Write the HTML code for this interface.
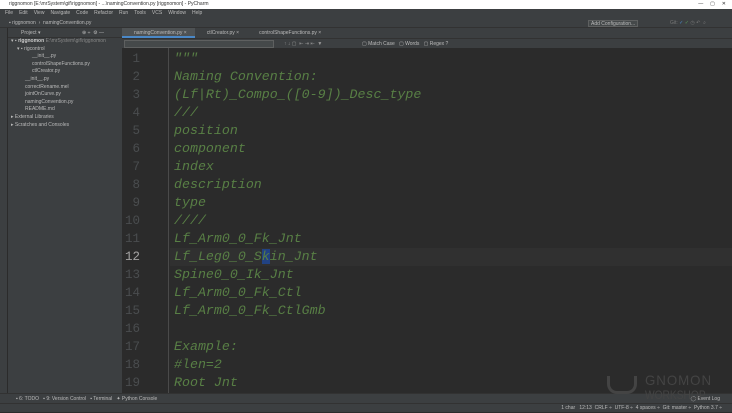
<!DOCTYPE html>
<html><head><meta charset="utf-8"><style>
*{margin:0;padding:0;box-sizing:border-box}
body{width:732px;height:412px;overflow:hidden;background:#2b2b2b;font-family:"Liberation Sans",sans-serif;font-size:5px;color:#bbb;position:relative}
.abs{position:absolute}
.title{left:0;top:0;width:732px;height:9px;background:#fff;color:#333;font-size:5px;line-height:9px;padding-left:9px}
.menu{left:0;top:9px;width:732px;height:9px;background:#3c3f41;line-height:9px;padding-left:2px}
.menu span{margin:0 3px}
.nav{left:0;top:18px;width:732px;height:10px;background:#3c3f41;line-height:10px;padding-left:9px;border-bottom:1px solid #323232}
.strip{left:0;top:28px;width:8px;height:365px;background:#3c3f41;border-right:1px solid #2b2b2b}
.proj{left:8px;top:28px;width:114px;height:365px;background:#3c3f41}
.proj .hd{height:10px;line-height:10px;padding-left:13px;border-bottom:1px solid #323232}
.proj div.r{height:7.6px;line-height:7.6px;white-space:nowrap}
.tabs{left:122px;top:28px;width:610px;height:10px;background:#3c3f41;line-height:10px}
.tab{display:inline-block;padding:0 8px 0 12px}
.tab.a{background:#4e5254;border-bottom:2px solid #4a88c7;height:10px}
.find{left:122px;top:38px;width:610px;height:10px;background:#3c3f41;line-height:10px;border-top:1px solid #323232}
.fbox{left:2px;top:1px;width:150px;height:8px;background:#45494a;border:1px solid #5e6060}
.gut{left:168px;top:48px;width:1px;height:345px;background:#4a4a4a}
.code{left:122px;top:48px;width:604px;height:345px;font-family:"Liberation Mono",monospace;font-style:italic;font-size:13.3px;}
.ln{position:absolute;left:0;width:610px;height:18px;line-height:18px}
.ln .n{position:absolute;left:0;width:18px;text-align:right;color:#4a4d4f;font-style:normal;font-size:12.5px}
.ln .t{position:absolute;left:52px;color:#587f45}
.cur{background:#303030}
.bot{left:0;top:393px;width:732px;height:10px;background:#3c3f41;line-height:10px;padding-left:16px;border-top:1px solid #323232}
.status{left:0;top:403px;width:732px;height:9px;background:#3c3f41;line-height:9px;border-top:1px solid #323232}
.wm{position:absolute;color:#444;font-size:14px;line-height:14px;letter-spacing:1px;transform-origin:0 0}
</style></head><body>
<div class="abs title">riggnomon [E:\mrSystem\gif\riggnomon] - ...\namingConvention.py [riggnomon] - PyCharm<span style="position:absolute;right:6px">—&nbsp;&nbsp;&nbsp;&nbsp;&nbsp;▢&nbsp;&nbsp;&nbsp;&nbsp;&nbsp;✕</span></div>
<div class="abs menu"><span>File</span><span>Edit</span><span>View</span><span>Navigate</span><span>Code</span><span>Refactor</span><span>Run</span><span>Tools</span><span>VCS</span><span>Window</span><span>Help</span></div>
<div class="abs nav">▪ riggnomon &nbsp;› &nbsp;namingConvention.py
<span style="position:absolute;left:588px;top:2px;height:7px;line-height:6px;border:1px solid #5e6060;padding:0 2px;background:#45494a">Add Configuration...</span>
<span style="position:absolute;left:670px;color:#777">Git: <span style="color:#4a88c7">✓</span> <span style="color:#5a9e5a">✓</span> ◷ ↶ &nbsp;⌕</span></div>
<div class="abs strip"></div>
<div class="abs proj">
<div class="hd">Project ▾<span style="position:absolute;left:74px">⊕ ÷ &nbsp;⚙ —</span></div>
<div class="r" style="padding-left:3px">▾ ▪ <b style="color:#ccc">riggnomon</b> <span style="color:#888">E:\mrSystem\gif\riggnomon</span></div>
<div class="r" style="padding-left:9px">▾ ▪ rigcontrol</div>
<div class="r" style="padding-left:24px">__init__.py</div>
<div class="r" style="padding-left:24px">controlShapeFunctions.py</div>
<div class="r" style="padding-left:24px">ctlCreator.py</div>
<div class="r" style="padding-left:17px">__init__.py</div>
<div class="r" style="padding-left:17px">correctRename.mel</div>
<div class="r" style="padding-left:17px">jointOnCurve.py</div>
<div class="r" style="padding-left:17px">namingConvention.py</div>
<div class="r" style="padding-left:17px">README.md</div>
<div class="r" style="padding-left:3px">▸ External Libraries</div>
<div class="r" style="padding-left:3px">▸ Scratches and Consoles</div>
</div>
<div class="abs tabs"><span class="tab a">namingConvention.py ×</span><span class="tab">ctlCreator.py ×</span><span class="tab">controlShapeFunctions.py ×</span></div>
<div class="abs find"><div class="abs fbox"></div><span style="position:absolute;left:162px;color:#999">↑ ↓ ▢ &nbsp;⇤ ⇥ ⇤ &nbsp;▼</span><span style="position:absolute;left:240px">▢ Match Case &nbsp;&nbsp;▢ Words &nbsp;&nbsp;▢ Regex ?</span></div>
<div class="abs code">
<div class="ln cur" style="top:200px;left:48px"></div>
<div class="ln" style="top:2px"><span class="n">1</span><span class="t">"""</span></div>
<div class="ln" style="top:20px"><span class="n">2</span><span class="t">Naming Convention:</span></div>
<div class="ln" style="top:38px"><span class="n">3</span><span class="t">(Lf|Rt)_Compo_([0-9])_Desc_type</span></div>
<div class="ln" style="top:56px"><span class="n">4</span><span class="t">///</span></div>
<div class="ln" style="top:74px"><span class="n">5</span><span class="t">position</span></div>
<div class="ln" style="top:92px"><span class="n">6</span><span class="t">component</span></div>
<div class="ln" style="top:110px"><span class="n">7</span><span class="t">index</span></div>
<div class="ln" style="top:128px"><span class="n">8</span><span class="t">description</span></div>
<div class="ln" style="top:146px"><span class="n">9</span><span class="t">type</span></div>
<div class="ln" style="top:164px"><span class="n">10</span><span class="t">////</span></div>
<div class="ln" style="top:182px"><span class="n">11</span><span class="t">Lf_Arm0_0_Fk_Jnt</span></div>
<div class="ln" style="top:200px"><span class="n" style="color:#a4a3a3">12</span><span class="t">Lf_Leg0_0_S<span style="background:#214283">k</span>in_Jnt</span></div>
<div class="ln" style="top:218px"><span class="n">13</span><span class="t">Spine0_0_Ik_Jnt</span></div>
<div class="ln" style="top:236px"><span class="n">14</span><span class="t">Lf_Arm0_0_Fk_Ctl</span></div>
<div class="ln" style="top:254px"><span class="n">15</span><span class="t">Lf_Arm0_0_Fk_CtlGmb</span></div>
<div class="ln" style="top:272px"><span class="n">16</span></div>
<div class="ln" style="top:290px"><span class="n">17</span><span class="t">Example:</span></div>
<div class="ln" style="top:308px"><span class="n">18</span><span class="t">#len=2</span></div>
<div class="ln" style="top:326px"><span class="n">19</span><span class="t">Root Jnt</span></div>
</div>
<div class="abs gut"></div>
<div class="abs bot">▪ 6: TODO &nbsp;&nbsp;▪ 9: Version Control &nbsp;&nbsp;▪ Terminal &nbsp;&nbsp;✦ Python Console<span style="position:absolute;right:12px">◯ Event Log</span></div>
<div class="abs status"><span style="position:absolute;right:10px">1 char &nbsp;&nbsp;12:13 &nbsp;CRLF ÷ &nbsp;UTF-8 ÷ &nbsp;4 spaces ÷ &nbsp;Git: master ÷ &nbsp;Python 3.7 ÷</span></div>
<div class="wm" style="left:645px;top:373px;transform:scaleX(0.95)">GNOMON</div>
<div class="wm" style="left:645px;top:388px;font-size:12px;letter-spacing:0;transform:scaleX(0.85)">WORKSHOP</div>
<div class="abs" style="left:607px;top:376px;width:30px;height:18px;border:3px solid #444;border-top:none;border-radius:0 0 10px 10px"></div>
</body></html>
